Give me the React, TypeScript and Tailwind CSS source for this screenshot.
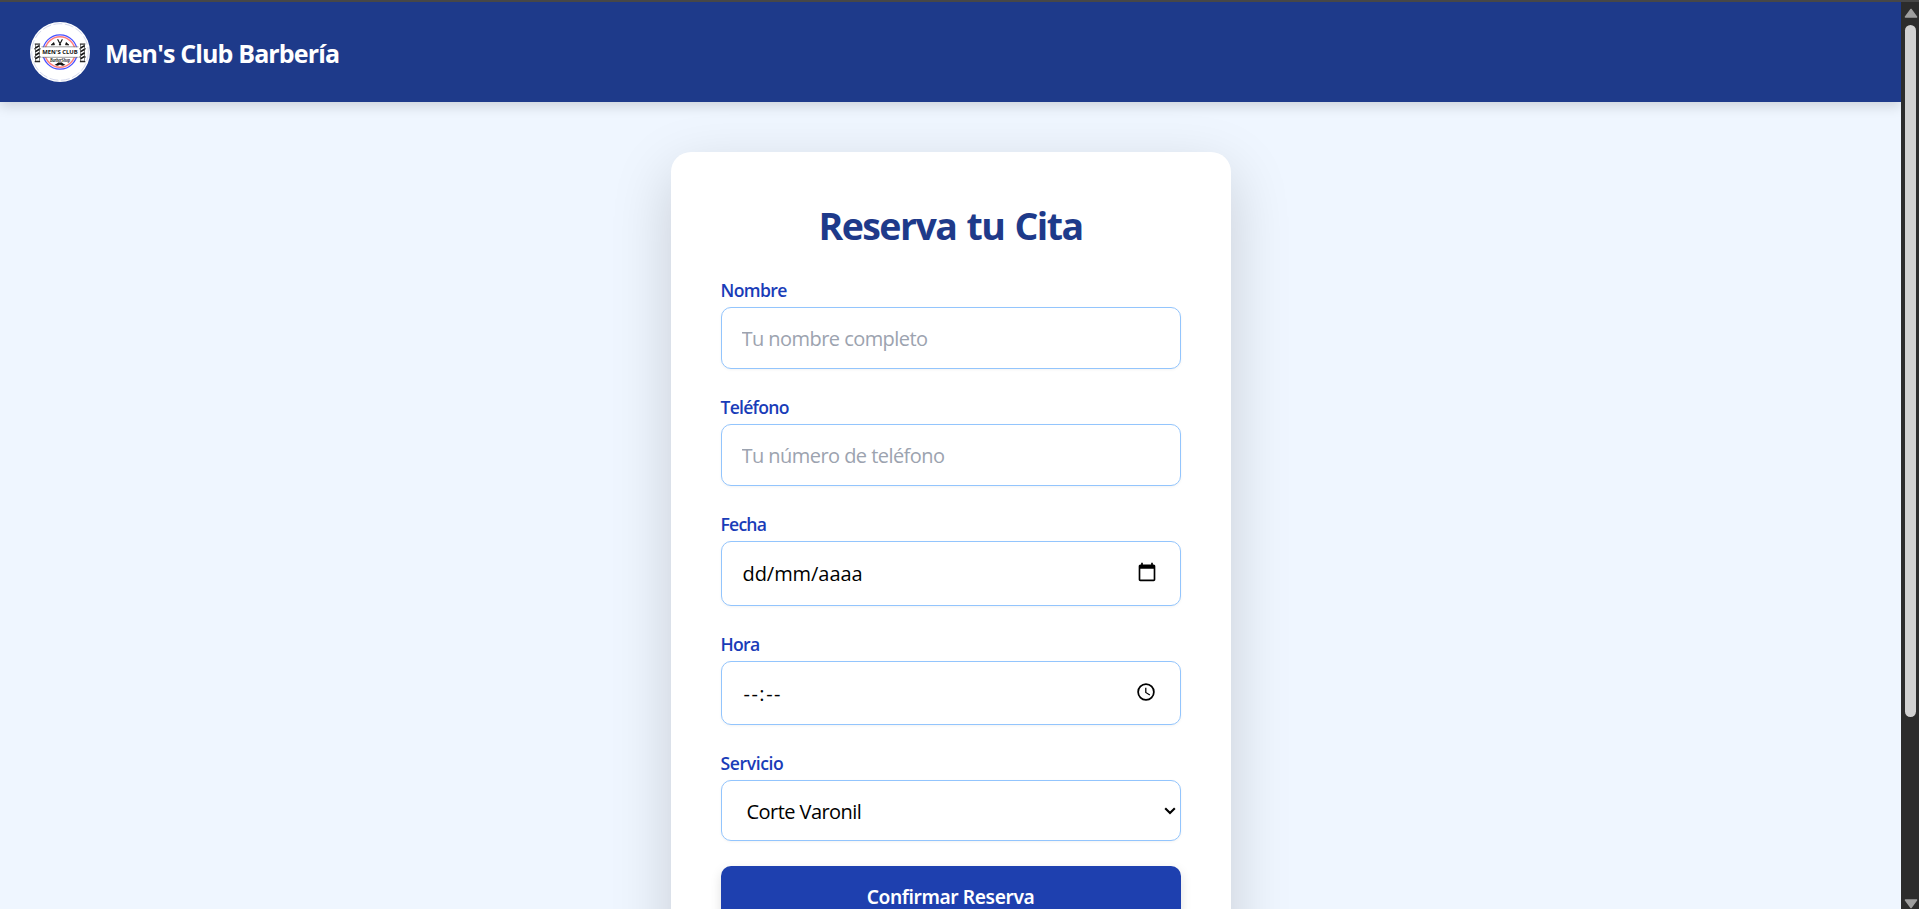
import type { ReactNode } from "react";

function Pole({ x }: { x: number }) {
  return (
    <g transform={`translate(${x} 21)`}>
      <path d="M0.3 1h5.4M0.3 18.6h5.4" stroke="#222" strokeWidth="1.2" />
      <rect x="1" y="1.6" width="4" height="16.4" fill="#fff" stroke="#333" strokeWidth=".6" />
      <path d="M1 5l4-2.4M1 8.6l4-2.4M1 12.2l4-2.4M1 15.8l4-2.4" stroke="#111" strokeWidth="1.6" />
      <path d="M-.1 5.8h1M5.1 5.8h1M-.1 14h1M5.1 14h1" stroke="#444" strokeWidth="1.6" />
    </g>
  );
}

function Logo() {
  return (
    <svg viewBox="0 0 60 60" className="size-[60px] shrink-0" role="img">
      <circle cx="30" cy="30" r="30" fill="#fff" />
      <circle cx="30" cy="30" r="28.3" fill="none" stroke="#b9c0e2" strokeWidth=".6" strokeDasharray="9 2.5" />
      <circle cx="30" cy="30" r="17.2" fill="none" stroke="#4a50ff" strokeWidth="1.3" />
      <circle cx="30" cy="30" r="15.2" fill="none" stroke="#ff7d7d" strokeWidth="1.5" />
      <path d="M27.6 17.2l3.2 6M32.4 17.2l-3.2 6" stroke="#111" strokeWidth="1.1" />
      <path d="M21 23l2.8-2.6.8 2.4zM39 23l-2.8-2.6-.8 2.4z" fill="#111" stroke="#111" strokeWidth=".6" />
      <rect x="11.5" y="25.2" width="37" height="9.8" fill="#fff" />
      <path d="M11.5 24.8h37M11.5 35.3h37" stroke="#777" strokeWidth=".7" />
      <Pole x={4.4} />
      <Pole x={49.6} />
      <text x="30" y="32.2" textAnchor="middle" textLength="35.5" lengthAdjust="spacingAndGlyphs" fontSize="5.6" fontWeight="700" fill="#111" fontFamily="Open Sans, sans-serif">
        MEN'S CLUB
      </text>
      <text x="30" y="39.8" textAnchor="middle" textLength="20" lengthAdjust="spacingAndGlyphs" fontSize="5.8" fontStyle="italic" fontWeight="700" fill="#222" fontFamily="Liberation Serif, serif">
        BarberShop
      </text>
      <path d="M24.5 42.6c2 .2 2.8-2.4 4.4-2.4.6 0 1 .4 1.1.6.1-.2.5-.6 1.1-.6 1.6 0 2.4 2.6 4.4 2.4-1.5 1.5-4.3 1.3-5.500 0-1.200 1.300-4 1.500-5.500 0z" fill="#111" />
    </svg>
  );
}

function Field({ label, tracking, children }: { label: string; tracking: string; children: ReactNode }) {
  return (
    <label className="flex flex-col">
      <span className={`mb-1 h-[26px] pt-px text-[17.6px] leading-[25px] font-semibold text-blue-800 ${tracking}`}>{label}</span>
      {children}
    </label>
  );
}

const box = "w-full rounded-[10px] border border-[#93c5fd] bg-white text-[20px] text-black shadow-[0_1px_3px_rgba(0,0,0,0.05)] outline-none";

function CalendarIcon() {
  return (
    <svg viewBox="0 0 24 24" className="mb-[3px] size-5" fill="#000">
      <path d="M20 3h-1V1h-2v2H7V1H5v2H4c-1.100 0-2 .9-2 2v16c0 1.100.9 2 2 2h16c1.100 0 2-.9 2-2V5c0-1.100-.9-2-2-2zm0 18H4V8h16v13z" />
    </svg>
  );
}

function ClockIcon() {
  return (
    <svg viewBox="0 0 24 24" className="mb-0.5 size-5" fill="#000">
      <path d="M12 1.500A10.500 10.500 0 1 0 12 22.500A10.500 10.500 0 1 0 12 1.500zM12 20.400A8.400 8.400 0 1 1 12 3.600A8.400 8.400 0 1 1 12 20.400z" />
      <path d="M12.500 7H11v6l5.250 3.150.75-1.230-4.500-2.670z" />
    </svg>
  );
}

function Scrollbar() {
  return (
    <div className="flex w-[18px] shrink-0 flex-col items-center bg-[#2c2c2c] pt-1.5">
      <svg viewBox="0 0 14 10" className="ml-px h-[10px] w-[14px]">
        <path d="M7 1.500L12.500 9h-11z" fill="#9f9f9f" stroke="#9f9f9f" strokeWidth="1.600" strokeLinejoin="round" />
      </svg>
      <div className="mt-[7px] ml-px h-[692px] w-[11px] rounded-full bg-[#d1d1d1]" />
      <svg viewBox="0 0 14 10" className="mt-auto ml-px h-[10px] w-[14px]">
        <path d="M7 8.500L12.500 1h-11z" fill="#9f9f9f" stroke="#9f9f9f" strokeWidth="1.600" strokeLinejoin="round" />
      </svg>
    </div>
  );
}

export default function App() {
  return (
    <div className="flex h-[909px] flex-col overflow-hidden font-['Open_Sans',sans-serif]">
      <div className="h-0.5 shrink-0 bg-[#474747]" />
      <div className="flex min-h-0 flex-1">
        <div className="flex min-w-0 flex-1 flex-col overflow-hidden bg-[#eff6ff]">
          <header className="z-10 flex h-[100px] shrink-0 items-center gap-[15px] bg-[#1e3a8a] px-[30px] shadow-[0_4px_12px_rgba(0,0,0,0.15)]">
            <Logo />
            <h1 className="mt-px text-[25px] leading-8 font-bold tracking-[-0.86px] text-white">Men's Club Barbería</h1>
          </header>
          <main className="mt-[50px] flex h-[900px] w-[560px] shrink-0 flex-col self-center rounded-[20px] bg-white px-[50px] pt-[49px] shadow-[0_20px_60px_rgba(0,0,0,0.17)]">
            <h2 className="h-[50px] text-center text-[37.500px] leading-[50px] font-bold tracking-[-1.55px] text-[#1e3a8a] [word-spacing:2px]">Reserva tu Cita</h2>
            <form className="mt-[26px] flex flex-col gap-[25px]">
              <Field label="Nombre" tracking="tracking-[-0.6px]">
                <input className={`${box} h-[62px] px-5 pt-px tracking-[-0.55px] placeholder:text-[#9ca3af]`} placeholder="Tu nombre completo" />
              </Field>
              <Field label="Teléfono" tracking="tracking-[-0.75px]">
                <input className={`${box} h-[62px] px-5 pt-px tracking-[-0.55px] placeholder:text-[#9ca3af]`} placeholder="Tu número de teléfono" />
              </Field>
              <Field label="Fecha" tracking="tracking-[-0.8px]">
                <div className={`${box} flex h-[65px] items-center justify-between pr-[23px] pl-[21px] tracking-[-0.05px]`}>
                  <span>dd/mm/aaaa</span>
                  <CalendarIcon />
                </div>
              </Field>
              <Field label="Hora" tracking="tracking-[-0.7px]">
                <div className={`${box} flex h-[64px] items-center justify-between pr-6 pl-[22px] tracking-[1.5px]`}>
                  <span className="pt-0.5">--:--</span>
                  <ClockIcon />
                </div>
              </Field>
              <Field label="Servicio" tracking="tracking-[-0.4px]">
                <div className={`${box} flex h-[61px] items-center justify-between pr-1 pl-[25px] tracking-[-0.55px]`}>
                  <span className="pt-0.5">Corte Varonil</span>
                  <svg viewBox="0 0 12 8" className="h-2 w-3">
                    <path d="M1.200 1.300L6 6.100l4.800-4.800" fill="none" stroke="#000" strokeWidth="2.100" />
                  </svg>
                </div>
              </Field>
              <button className="h-[62px] rounded-[10px] bg-[#1e40af] font-['Noto_Sans',sans-serif] text-[19.200px] font-semibold tracking-[-0.4px] text-white shadow-[0_4px_12px_rgba(0,0,0,0.12)]">
                Confirmar Reserva
              </button>
            </form>
          </main>
        </div>
        <Scrollbar />
      </div>
    </div>
  );
}
